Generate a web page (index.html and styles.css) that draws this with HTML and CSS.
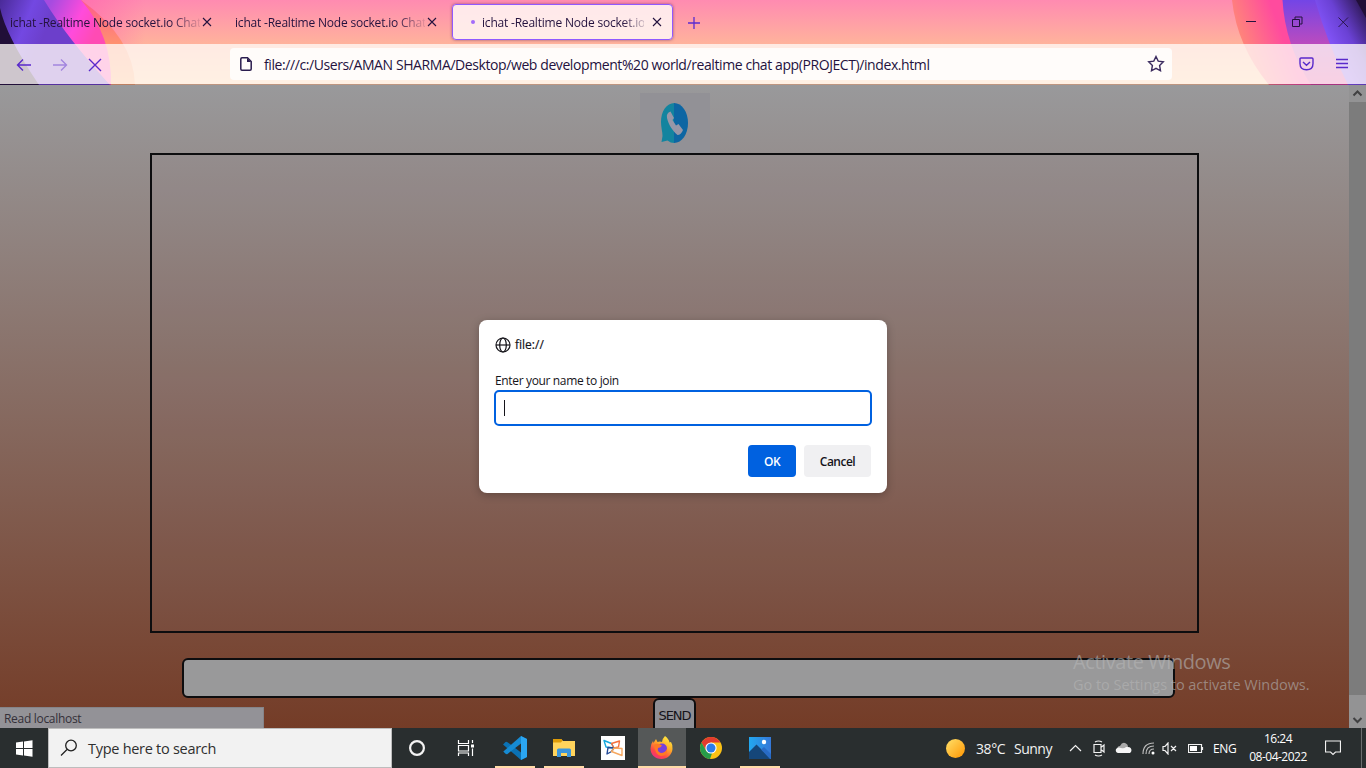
FILE: index.html
```html
<!DOCTYPE html>
<html lang="en">
<head>
<meta charset="utf-8">
<title>ichat</title>
<link rel="stylesheet" href="styles.css">
</head>
<body>
<div class="screen">
  <header class="chrome">
    <svg class="theme" width="1366" height="85" viewBox="0 0 1366 85">
      <defs>
        <linearGradient id="sky" x1="0" y1="0" x2="0" y2="1"><stop offset="0" stop-color="#ff8bb1"/><stop offset=".52" stop-color="#ffb39c"/><stop offset="1" stop-color="#ffcf9c"/></linearGradient>
        <linearGradient id="glow" x1="0" x2="1" y1="0" y2="0"><stop offset="0" stop-color="#ff5fae"/><stop offset="1" stop-color="#ff5fae" stop-opacity="0"/></linearGradient>
        <linearGradient id="lo" x1="0" y1="0" x2="0" y2="1"><stop offset="0" stop-color="#ff5a8c"/><stop offset=".5" stop-color="#ff9070"/><stop offset="1" stop-color="#ffb070"/></linearGradient>
        <linearGradient id="lm" gradientUnits="userSpaceOnUse" x1="52" y1="0" x2="100" y2="24"><stop offset="0" stop-color="#a64be0"/><stop offset=".6" stop-color="#ff4bdc"/><stop offset="1" stop-color="#ff4bb4"/></linearGradient>
        <linearGradient id="lp" gradientUnits="userSpaceOnUse" x1="0" y1="0" x2="50" y2="20"><stop offset="0" stop-color="#4a2a98"/><stop offset=".6" stop-color="#7348e2"/><stop offset="1" stop-color="#6c3fcb"/></linearGradient>
        <linearGradient id="ro" gradientUnits="userSpaceOnUse" x1="1235" y1="30" x2="1275" y2="15"><stop offset="0" stop-color="#ff8878"/><stop offset="1" stop-color="#ff4b9e"/></linearGradient>
        <linearGradient id="rm" x1="0" y1="0" x2="0" y2="1"><stop offset="0" stop-color="#7345e6"/><stop offset=".5" stop-color="#b84bc0"/><stop offset="1" stop-color="#e0409c"/></linearGradient>
        <linearGradient id="rp" gradientUnits="userSpaceOnUse" x1="1325" y1="30" x2="1366" y2="8"><stop offset="0" stop-color="#8052f4"/><stop offset=".4" stop-color="#6a41d4"/><stop offset="1" stop-color="#2b164f"/></linearGradient>
      </defs>
      <rect width="1366" height="85" fill="url(#sky)"/>
      <rect x="80" width="65" height="44" fill="url(#glow)" opacity=".6"/>
      <path d="M0 0H81Q134 38 135 85H0Z" fill="url(#lo)"/>
      <path d="M0 0H81Q112 35 111 85H0Z" fill="url(#lm)"/>
      <path d="M0 0H44Q67 38 110 85H0Z" fill="url(#lp)"/>
      <path d="M0 8Q6 36 39 85H0Z" fill="#210f38"/>
      <path d="M1366 0H1232Q1237 46 1269 85H1366Z" fill="url(#ro)"/>
      <path d="M1366 0H1282.500Q1285 45 1311 85H1366Z" fill="url(#rm)"/>
      <path d="M1366 0H1315Q1327 42 1348 85H1366Z" fill="url(#rp)"/>
      <path d="M1366 0H1356L1366 18Z" fill="#210f38"/>
      <rect y="84" width="1366" height="1" fill="#24123e" opacity=".3"/>
    </svg>
    <div class="tabs">
      <div class="tab t1"><span class="label">ichat -Realtime Node socket.io Chat</span><svg class="x" width="10" height="10"><path d="M1 1L9 9M9 1L1 9"/></svg></div>
      <div class="tab t2"><span class="label">ichat -Realtime Node socket.io Chat</span><svg class="x" width="10" height="10"><path d="M1 1L9 9M9 1L1 9"/></svg></div>
      <div class="tab active"><i class="dot"></i><span class="label">ichat -Realtime Node socket.io</span><svg class="x" width="10" height="10"><path d="M1 1L9 9M9 1L1 9"/></svg></div>
      <svg class="plus" width="14" height="14"><path d="M7 1V13M1 7H13"/></svg>
      <div class="window-buttons">
        <svg width="11" height="12"><path d="M0 5.500H10"/></svg>
        <svg width="11" height="12"><path d="M.5 3.500H7.500V10.500H.5ZM3 3V1H10V8H8"/></svg>
        <svg width="11" height="12"><path d="M.5 1.500L10 11M10 1.500L.5 11" stroke-width=".9"/></svg>
      </div>
    </div>
    <div class="toolbar">
      <div class="nav">
        <svg width="16" height="14"><path d="M15 7H1.500M7 1.500L1.500 7L7 12.500"/></svg>
        <svg class="off" width="16" height="14"><path d="M1 7H14.500M9 1.500L14.500 7L9 12.500"/></svg>
        <svg width="14" height="14"><path d="M1 1L13 13M13 1L1 13"/></svg>
      </div>
      <div class="url">
        <svg width="12" height="14"><path d="M2 .8H7.500L11.200 4.500V12Q11.200 13.200 10 13.200H2Q.8 13.200 .8 12V2Q.8 .8 2 .8Z" fill="none" stroke="#2b1d4f" stroke-width="1.500"/><path d="M7 1V5H11Z" fill="#2b1d4f"/></svg>
        <span class="address">file:///c:/Users/AMAN SHARMA/Desktop/web development%20 world/realtime chat app(PROJECT)/index.html</span>
        <svg class="star" width="18" height="18" viewBox="0 0 18 18"><path d="M9 1.500L11.200 6.100L16.300 6.800L12.600 10.400L13.500 15.800L9 13.300L4.500 15.800L5.400 10.400L1.700 6.800L6.800 6.100Z"/></svg>
      </div>
      <div class="tools">
        <svg width="15" height="14"><path d="M2 1H13Q14 1 14 2V6.500Q14 12.800 7.500 12.800Q1 12.800 1 6.500V2Q1 1 2 1ZM4 5L7.500 8.300L11 5"/></svg>
        <svg width="12" height="12"><path d="M0 1.500H12M0 5.500H12M0 9.500H12"/></svg>
      </div>
    </div>
  </header>

  <main class="viewport">
    <div class="page">
      <div class="logo"><svg width="29" height="42" viewBox="0 0 29 42"><path d="M14.500 1C6.500 1 1 9.500 1 20C1 25 2.500 30 2.500 34L1.500 40L7.500 38.500Q10.500 41 14.500 41Z" fill="#13849f"/><path d="M14 1C22 1 28 10 28 21S22 41 14 41Z" fill="#0d66a3"/><path d="M10.500 9.500Q6 11 7 16C8.500 23 13 29 17.500 33Q21 33 23 28L18.500 22L16 23.500L12.500 18L14 16Z" fill="#9797a8"/></svg></div>
      <div class="messages"></div>
      <div class="message-input"></div>
      <div class="send">SEND</div>
    </div>
    <div class="scrollbar">
      <svg width="17" height="17"><path d="M4.500 10.500L8.500 6.500L12.500 10.500"/></svg>
      <div class="thumb"></div>
      <svg width="17" height="17"><path d="M4.500 7L8.500 11L12.500 7"/></svg>
    </div>
    <div class="status">Read localhost</div>
    <div class="activate"><div class="big">Activate Windows</div><div class="small">Go to Settings to activate Windows.</div></div>
    <section class="dialog">
      <div class="origin"><svg width="16" height="16" viewBox="0 0 16 16"><circle cx="8" cy="8" r="7"/><ellipse cx="8" cy="8" rx="3.300" ry="7"/><path d="M1 8H15"/></svg><span>file://</span></div>
      <div class="prompt">Enter your name to join</div>
      <div class="field"><i></i></div>
      <div class="actions"><div class="btn ok">OK</div><div class="btn cancel">Cancel</div></div>
    </section>
  </main>

  <footer class="taskbar">
    <div class="start"><svg width="17" height="17"><path d="M0 2.500L7 1.500V8H0ZM8 1.400L16.500 .2V8H8ZM0 9H7V15.500L0 14.500ZM8 9H16.500V16.700L8 15.600Z" fill="#fff"/></svg></div>
    <div class="search"><svg width="18" height="18"><circle cx="11" cy="6.500" r="5.300"/><path d="M7 10.500L1 16.500"/></svg><span>Type here to search</span></div>
    <div class="apps">
      <div class="app"><svg width="18" height="18"><circle cx="9" cy="9" r="6.900" fill="none" stroke="#f3f3f3" stroke-width="2.200"/></svg></div>
      <div class="app"><svg width="18" height="16"><path d="M1.500 0V3.500H11.500V0M1.500 16V13H11.500V16M1.500 5.500H11.500V11H1.500ZM15.500 0V3M15.500 8.500V16" fill="none" stroke="#fff" stroke-width="1.200"/><path d="M14 4.500H17V7.500H14Z" fill="#fff"/></svg></div>
      <div class="app run"><svg width="24" height="24" viewBox="0 0 24 24"><path d="M18 0L24 3V21L18 24L0 8.500L2.500 6Q3.500 5.500 4.500 6.200L18 16.500Z" fill="#0b72b5"/><path d="M18 0V7.500L4.500 18Q3.500 18.500 2.500 17.700L.3 15.500Z" fill="#168bd3"/><path d="M18 0L24 3V21L18 24Z" fill="#2ba6f2"/></svg></div>
      <div class="app run"><svg width="22" height="20"><path d="M0 1H8L10 3H22V18H0Z" fill="#ffd45c"/><path d="M0 1H8.500L9.500 2.500L8 4.500H0Z" fill="#dd9b08"/><path d="M4 19V12Q4 10.500 5.500 10.500H16.500Q18 10.500 18 12V19H14V15H8V19Z" fill="#3b96dc"/></svg></div>
      <div class="app"><svg width="24" height="24"><rect width="24" height="24" fill="#fff"/><g fill="none" stroke-width="1.400" stroke-linejoin="round"><path d="M3 4.500L10.500 7.500L13 12L5 11Z" stroke="#16a8dd"/><path d="M10.500 7.500L18.500 5L17.500 11L13 12Z" stroke="#f6703c"/><path d="M7 11.500L13 12L10.500 15.500L6 18Z" stroke="#234a96"/><path d="M13 12L21 12.500V19.500L10.500 15.500Z" stroke="#f6a860"/></g></svg></div>
      <div class="app run current"><svg width="23" height="24" viewBox="0 0 23 24"><defs><linearGradient id="ff" x1=".8" y1="0" x2=".2" y2="1"><stop stop-color="#fff044"/><stop offset=".4" stop-color="#ffab27"/><stop offset=".75" stop-color="#ff4646"/><stop offset="1" stop-color="#ef2b8a"/></linearGradient></defs><path d="M15 0Q19 3 19.500 6.500L21 6Q23 9 22.500 13C22 19 17 23 11.500 23C5 23 .5 18.500 .5 12.500Q.5 8 3 5L3.500 7L6 3L7.500 6Q10 5 12 6Q12 3 15 0Z" fill="url(#ff)"/><circle cx="12" cy="12.500" r="5" fill="#7840dc"/><path d="M4 9Q8 6.500 12 9.500Q11 11.500 8 12Q7 16 11 17Q15 17 17 13Q18 20 11 20Q5 19 4 9Z" fill="#ff7a24"/></svg></div>
      <div class="app"><svg width="24" height="24" viewBox="0 0 24 24"><circle cx="12" cy="12" r="11" fill="#fbc116"/><path d="M2.500 6.500A11 11 0 0 1 21.500 6.500H12L7.200 14.800Z" fill="#e33b2e"/><path d="M2.500 6.500L7.200 14.800Q9.500 17.500 13 17.300L11 23A11 11 0 0 1 2.500 6.500Z" fill="#269c4a"/><circle cx="12" cy="12" r="5.600" fill="#fff"/><circle cx="12" cy="12" r="4.500" fill="#2c7cea"/></svg></div>
      <div class="app run"><svg width="22" height="22"><defs><linearGradient id="ph"><stop stop-color="#22a8f0"/><stop offset="1" stop-color="#3578d8"/></linearGradient></defs><rect width="22" height="22" fill="url(#ph)"/><path d="M0 15L7.500 7.500L22 22H0Z" fill="#154679"/><path d="M12 12.500L15 10L22 17V22H21Z" fill="#286bc5"/><circle cx="15" cy="5" r="2.200" fill="#fff"/></svg></div>
    </div>
    <div class="weather"><i class="sun"></i><span class="deg">38°C</span><span class="cond">Sunny</span></div>
    <div class="tray">
      <svg class="chev" width="13" height="8"><path d="M1 7L6.500 1.500L12 7"/></svg>
      <svg class="meet" width="12" height="17"><path d="M2 2Q5.500 0 9 2M2 15Q5.500 17 9 15M1 4.500H8V12.500H1ZM8.500 7L11 5V12L8.500 10"/></svg>
      <svg class="cloud" width="17" height="12"><path d="M2 8Q2 4 5 4Q7 0 10 1Q13 2 13 5Q16 5 16 8Z" fill="#aaa" stroke="none"/><path d="M3 11Q0 10 1 7Q3 4.500 6 6Q9 7 11 5Q16 4.500 16.500 8Q16.500 10 15 11Z" fill="#f5f5f5" stroke="none"/></svg>
      <svg class="wifi" width="13" height="13"><path d="M1 12Q1 1 12 1M4 12Q4 4 12 4M7 12Q7 7 12 7" stroke="#bbb"/><circle cx="11" cy="11" r="1.500" fill="#fff" stroke="none"/></svg>
      <svg class="vol" width="15" height="13"><path d="M1 4.500H3L6 1V12L3 8.500H1ZM9 4L14 9M14 4L9 9"/></svg>
      <svg class="batt" width="16" height="9"><path d="M.5 .5H13.500V8.500H.5ZM14.500 3V6"/><path d="M2 2H9V7H2Z" fill="#fff" stroke="none"/></svg>
      <span class="lang">ENG</span>
      <div class="clock"><div class="time">16:24</div><div class="date">08-04-2022</div></div>
      <svg class="note" width="16" height="16"><path d="M.5 1H15.500V12H10.500L8 14.500L5.500 12H.5Z"/></svg>
    </div>
    <div class="peek"></div>
  </footer>
</div>
</body>
</html>
```
FILE: styles.css
```css
* { box-sizing: border-box; }
body { margin: 0; font-family: "Open Sans", "Noto Sans", sans-serif; font-size: 12px; color: #15141a; overflow: hidden; }
svg { display: block; flex: none; }
span, .prompt, .status, .activate, .btn { white-space: nowrap; }
.screen { width: 1366px; height: 768px; display: flex; flex-direction: column; }

.chrome { position: relative; height: 85px; flex: none; }
.theme { position: absolute; top: 0; left: 0; }
.tabs { position: relative; height: 44px; display: flex; align-items: center; padding-left: 10px; }
.tab { display: flex; align-items: center; height: 36px; color: #24123e; }
.tab .label { width: 190px; letter-spacing: -.2px; line-height: 18px; padding-top: 1px; -webkit-mask-image: linear-gradient(90deg, #000 160px, transparent 194px); mask-image: linear-gradient(90deg, #000 160px, transparent 194px); }
.tab .x { margin-left: 2px; stroke: #24123e; fill: none; stroke-width: 1.1; }
.t1 { width: 225px; }
.t2 { width: 217px; }
.tab.active { width: 221px; height: 36px; border: 1px solid #9059ff; border-radius: 4px; background: rgba(255,247,245,.86); box-shadow: 0 0 3px rgba(80,30,90,.6); padding-left: 18px; }
.tab.active .label { width: 162px; margin-left: 7px; -webkit-mask-image: linear-gradient(90deg, #000 140px, transparent 168px); mask-image: linear-gradient(90deg, #000 140px, transparent 168px); }
.tab.active .x { margin-left: 8px; }
.dot { width: 4px; height: 4px; border-radius: 50%; background: #a36bfa; flex: none; }
.plus { margin-left: 14px; margin-top: 1px; stroke: #5b2bd0; stroke-width: 1.3; }
.window-buttons { display: flex; gap: 35px; margin-left: auto; padding-right: 17px; }
.window-buttons svg { stroke: #24123e; fill: none; }
.toolbar { position: relative; height: 40px; display: flex; align-items: center; background: rgba(255,250,247,.78); }
.nav { display: flex; align-items: center; gap: 20px; width: 230px; padding: 1px 0 0 16px; }
.nav svg, .tools svg { stroke: #592acb; fill: none; stroke-width: 1.4; }
.nav .off { opacity: .45; }
.url { width: 942px; height: 32px; border-radius: 4px; background: #fffcfa; display: flex; align-items: center; padding-left: 10px; }
.address { font-size: 14px; margin-left: 12px; width: 883px; letter-spacing: -.412px; color: #24123e; }
.star { fill: none; stroke: #3b2b5f; stroke-width: 1.4; }
.tools { display: flex; align-items: center; gap: 22px; margin-left: 127px; }

.viewport { position: relative; display: flex; height: 643px; background: linear-gradient(#99999b, #743c27); overflow: hidden; }
.page { width: 1349px; display: flex; flex-direction: column; align-items: center; padding-top: 8px; }
.logo { width: 70px; height: 60px; background: #929196; display: flex; justify-content: center; align-items: center; flex: none; }
.messages { width: 1049px; height: 480px; border: 2px solid #0d0d0f; background: rgba(140,120,130,.06); flex: none; }
.message-input { width: 993px; height: 40px; border: 2px solid #0d0d0f; border-radius: 6px; background: #99999a; margin: 25px 0 0 8px; flex: none; }
.send { width: 43px; height: 36px; border: 2px solid #0d0d0f; border-radius: 6px; background: #8e8e94; text-align: center; font-family: "DejaVu Sans", sans-serif; font-size: 13px; letter-spacing: -1px; line-height: 32px; flex: none; }
.scrollbar { width: 17px; background: #939394; }
.scrollbar svg { stroke: #414142; stroke-width: 2; fill: none; }
.scrollbar .thumb { height: 593px; background: #7c7c7c; margin-bottom: 16px; }
.status { position: absolute; left: 0; bottom: 0; width: 264px; height: 21px; background: #939297; border-top: 1px solid #858489; border-right: 1px solid #858489; padding-left: 4px; line-height: 22px; letter-spacing: -.3px; color: #343039; }
.activate { position: absolute; left: 1073px; top: 563px; color: rgba(181,181,181,.6); }
.big { font-size: 20px; line-height: 28px; letter-spacing: -.42px; }
.small { font-size: 14.5px; line-height: 18px; letter-spacing: -.03px; }
.dialog { position: absolute; left: 479px; top: 235px; width: 408px; height: 173px; border-radius: 8px; background: #fff; padding: 16px; box-shadow: 0 2px 8px rgba(0,0,0,.25); font-size: 12px; }
.origin { display: flex; align-items: center; gap: 4px; height: 17px; -webkit-text-stroke: .2px #15141a; }
.origin svg { fill: none; stroke: #15141a; stroke-width: 1.2; }
.prompt { margin-top: 18px; height: 19px; line-height: 20px; letter-spacing: -.35px; }
.field { height: 36px; border: 2px solid #0061e0; border-radius: 5px; margin: 0 -1px; display: flex; align-items: center; padding-left: 8px; }
.field i { width: 1px; height: 16px; background: #15141a; }
.actions { display: flex; justify-content: flex-end; gap: 8px; margin-top: 19px; }
.btn { height: 32px; line-height: 34px; border-radius: 4px; text-align: center; font-weight: 600; letter-spacing: -.5px; }
.ok { width: 48px; background: #0061e0; color: #fff; }
.cancel { width: 67px; background: #f0f0f2; }

.taskbar { height: 40px; background: #292e2f; display: flex; color: #fff; }
.start { width: 48px; display: flex; align-items: center; justify-content: center; }
.search { width: 344px; background: #f2f2f2; border: 1px solid #bdbdbd; display: flex; align-items: center; padding-left: 11px; gap: 10px; font-size: 14.5px; letter-spacing: -.28px; color: #2f2f2f; }
.search svg { fill: none; stroke: #202020; stroke-width: 1.3; }
.apps { display: flex; width: 554px; }
.app { width: 49px; display: flex; align-items: center; justify-content: center; position: relative; }
.app.run::after { content: ""; position: absolute; left: 5px; right: 4px; bottom: 0; height: 2px; background: #ffdba7; }
.app.current { background: linear-gradient(90deg, transparent 1px, #555858 1px); }
.app.current::after { left: 1px; right: 0; }
.weather { display: flex; align-items: center; width: 123px; font-size: 14px; color: #f2f2f2; padding-top: 1px; }
.sun { width: 19px; height: 19px; border-radius: 50%; background: linear-gradient(135deg, #ffe16b, #ff9500); }
.deg { margin-left: 11px; width: 38px; letter-spacing: -.4px; }
.cond { letter-spacing: -.5px; }
.tray { display: flex; align-items: center; }
.tray svg { fill: none; stroke: #f2f2f2; stroke-width: 1.2; }
.meet { margin-left: 11px; }
.cloud { margin-left: 10px; }
.wifi { margin-left: 10px; }
.vol { margin-left: 7px; }
.batt { margin-left: 11px; }
.lang { margin-left: 9px; width: 24px; font-size: 12px; letter-spacing: -.4px; }
.clock { width: 60px; margin-left: 11px; text-align: center; font-size: 12px; line-height: 18px; letter-spacing: -.5px; white-space: nowrap; }
.note { margin-left: 17px; }
.peek { width: 1px; margin-left: auto; margin-right: 4px; background: #6a6d6e; }
```
